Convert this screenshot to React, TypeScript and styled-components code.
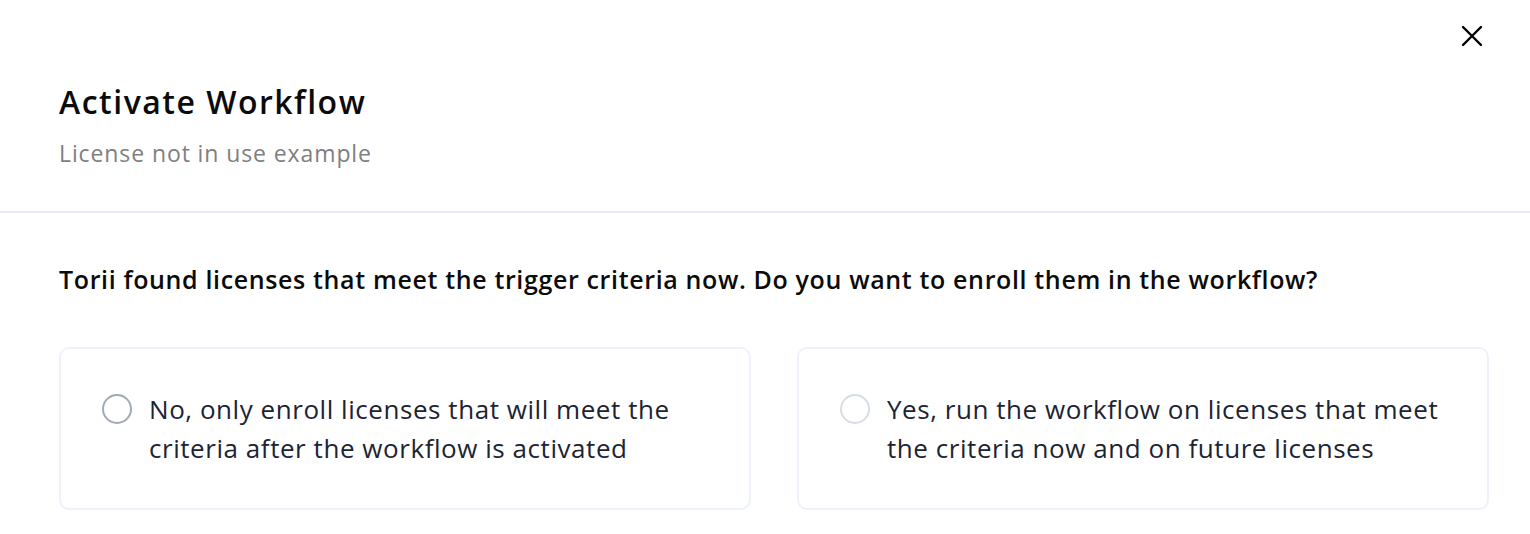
import styled, { createGlobalStyle } from 'styled-components';

const GlobalStyle = createGlobalStyle`
  body {
    margin: 0;
    background: #ffffff;
    font-family: 'Open Sans', 'Noto Sans', sans-serif;
  }
`;

const App = () => {
  return (
    <>
      <GlobalStyle />
      <Modal>
        <Header>
          <CloseButton aria-label="Close">
            <svg width="22" height="22" viewBox="0 0 22 22">
              <path d="M2 2 L20 20 M20 2 L2 20" stroke="#000" strokeWidth="2.4" strokeLinecap="round" />
            </svg>
          </CloseButton>
          <Title>Activate Workflow</Title>
          <Subtitle>License not in use example</Subtitle>
        </Header>
        <Body>
          <Question>
            Torii found licenses that meet the trigger criteria now. Do you want to enroll them in the workflow?
          </Question>
          <Options>
            <OptionCard>
              <Radio tone="#a2a9b4" />
              <OptionText>No, only enroll licenses that will meet the criteria after the workflow is activated</OptionText>
            </OptionCard>
            <OptionCard>
              <Radio tone="#d7dde5" />
              <OptionText>Yes, run the workflow on licenses that meet the criteria now and on future licenses</OptionText>
            </OptionCard>
          </Options>
        </Body>
      </Modal>
    </>
  );
};

const Modal = styled.div`
  width: 1530px;
  height: 534px;
  background: #ffffff;
  overflow: hidden;
`;

const Header = styled.div`
  position: relative;
  padding: 82px 59px 0;
  height: 213px;
  box-sizing: border-box;
  border-bottom: 2px solid #e6eaf4;
  display: flex;
  flex-direction: column;
`;

const CloseButton = styled.button`
  position: absolute;
  top: 25px;
  right: 47px;
  width: 22px;
  height: 22px;
  padding: 0;
  border: none;
  background: none;
  display: flex;
`;

const Title = styled.div`
  font-size: 32px;
  line-height: 40px;
  font-weight: 600;
  letter-spacing: 1.5px;
  color: #0b0b0b;
`;

const Subtitle = styled.div`
  margin-top: 16px;
  font-size: 23px;
  line-height: 30px;
  letter-spacing: 0.9px;
  color: #808080;
`;

const Body = styled.div`
  padding: 48px 40px 0 59px;
  display: flex;
  flex-direction: column;
`;

const Question = styled.div`
  font-size: 25px;
  line-height: 36px;
  font-weight: 600;
  letter-spacing: 0.64px;
  color: #0b0b0b;
`;

const Options = styled.div`
  margin-top: 50px;
  display: grid;
  grid-template-columns: 692px 692px;
  gap: 46px;
`;

const OptionCard = styled.div`
  height: 163px;
  box-sizing: border-box;
  border: 2px solid #eef2fa;
  border-radius: 10px;
  padding: 41px 30px 0 41px;
  display: flex;
  align-items: flex-start;
  gap: 17px;
`;

const Radio = styled.span<{ tone: string }>`
  flex: none;
  width: 30px;
  height: 30px;
  margin-top: 4px;
  box-sizing: border-box;
  border-radius: 50%;
  border: 2.5px solid ${({ tone }) => tone};
`;

const OptionText = styled.div`
  font-size: 26px;
  line-height: 39px;
  letter-spacing: 0.55px;
  color: #1c2433;
`;

export default App;
